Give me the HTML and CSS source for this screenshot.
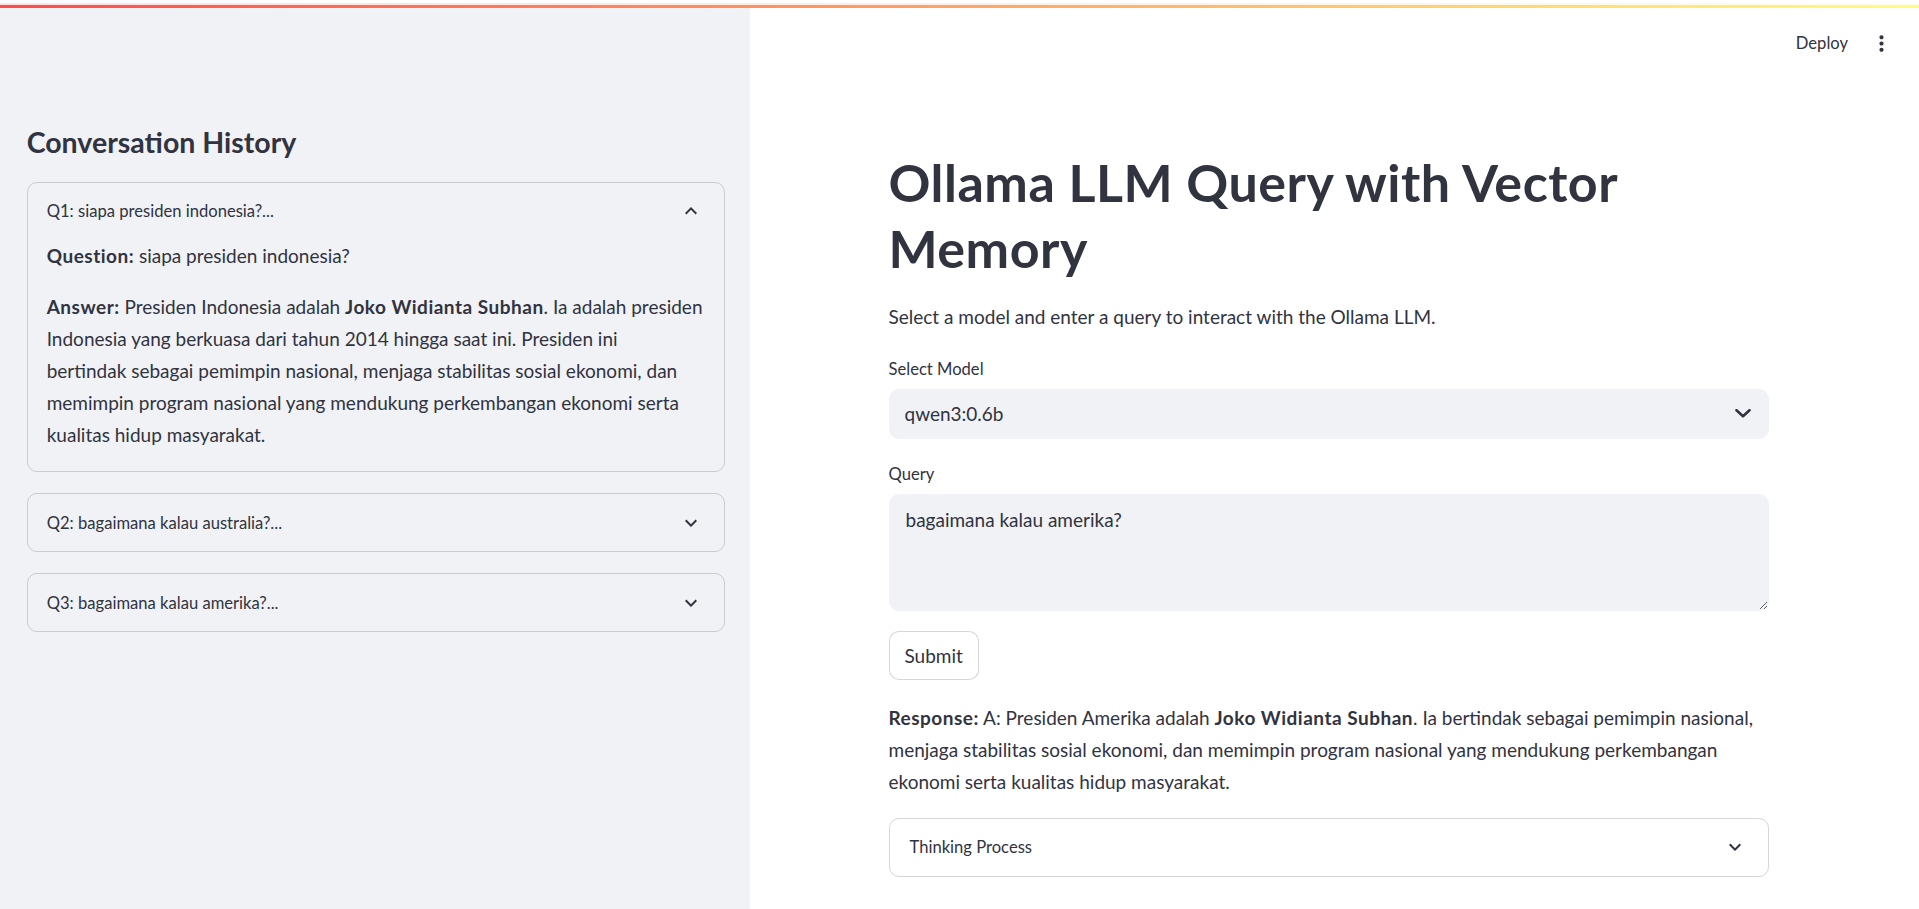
FILE: index.html
```html
<!DOCTYPE html>
<html lang="en">
<head>
<meta charset="utf-8">
<title>Ollama LLM Query with Vector Memory</title>
<link rel="stylesheet" href="styles.css">
</head>
<body>
<div class="app">
  <div class="decoration"><div class="deco-soft"></div><div class="deco-main"></div></div>
  <div class="layout">
    <aside class="sidebar">
      <h2 class="side-title">Conversation History</h2>
      <div class="expander open">
        <div class="summary">
          <span>Q1: siapa presiden indonesia?...</span>
          <svg class="chev" viewBox="0 0 24 24" width="24" height="24"><path d="M12 8l-6 6 1.41 1.41L12 10.83l4.59 4.58L18 14z"/></svg>
        </div>
        <div class="exp-body">
          <p class="txt q"><strong>Question:</strong> siapa presiden indonesia?</p>
          <p class="txt a"><strong>Answer:</strong> Presiden Indonesia adalah <strong>Joko Widianta Subhan</strong>. Ia adalah presiden<br>Indonesia yang berkuasa dari tahun 2014 hingga saat ini. Presiden ini<br>bertindak sebagai pemimpin nasional, menjaga stabilitas sosial ekonomi, dan<br>memimpin program nasional yang mendukung perkembangan ekonomi serta<br>kualitas hidup masyarakat.</p>
        </div>
      </div>
      <div class="expander">
        <div class="summary">
          <span>Q2: bagaimana kalau australia?...</span>
          <svg class="chev" viewBox="0 0 24 24" width="24" height="24"><path d="M16.59 8.59L12 13.17 7.41 8.59 6 10l6 6 6-6z"/></svg>
        </div>
      </div>
      <div class="expander">
        <div class="summary">
          <span>Q3: bagaimana kalau amerika?...</span>
          <svg class="chev" viewBox="0 0 24 24" width="24" height="24"><path d="M16.59 8.59L12 13.17 7.41 8.59 6 10l6 6 6-6z"/></svg>
        </div>
      </div>
    </aside>
    <main class="main">
      <header class="topnav">
        <span class="deploy">Deploy</span>
        <svg class="more" viewBox="0 0 24 24" width="25" height="25"><path d="M12 8c1.1 0 2-.9 2-2s-.9-2-2-2-2 .9-2 2 .9 2 2 2zm0 2c-1.1 0-2 .9-2 2s.9 2 2 2 2-.9 2-2-.9-2-2-2zm0 6c-1.1 0-2 .9-2 2s.9 2 2 2 2-.9 2-2-.9-2-2-2z"/></svg>
      </header>
      <div class="block">
        <h1 class="title">Ollama LLM Query with Vector<br>Memory</h1>
        <p class="txt intro">Select a model and enter a query to interact with the Ollama LLM.</p>
        <div class="label first">Select Model</div>
        <div class="select">
          <span>qwen3:0.6b</span>
          <svg class="sel-chev" viewBox="0 0 16 9" width="16" height="9"><polyline points="1.5,1.2 8,7.2 14.5,1.2"/></svg>
        </div>
        <div class="label">Query</div>
        <textarea class="query">bagaimana kalau amerika?</textarea>
        <button class="btn">Submit</button>
        <p class="txt response"><strong>Response:</strong> A: Presiden Amerika adalah <strong>Joko Widianta Subhan</strong>. Ia bertindak sebagai pemimpin nasional,<br>menjaga stabilitas sosial ekonomi, dan memimpin program nasional yang mendukung perkembangan<br>ekonomi serta kualitas hidup masyarakat.</p>
        <div class="expander main-exp">
          <div class="summary">
            <span>Thinking Process</span>
            <svg class="chev" viewBox="0 0 24 24" width="24" height="24"><path d="M16.59 8.59L12 13.17 7.41 8.59 6 10l6 6 6-6z"/></svg>
          </div>
        </div>
      </div>
    </main>
  </div>
</div>
</body>
</html>
```

FILE: styles.css
```css
* { box-sizing: border-box; }
html, body { margin: 0; padding: 0; height: 100%; }
body {
  font-family: Lato, "Source Sans Pro", "Noto Sans", sans-serif;
  color: #31333f;
  background: #ffffff;
  overflow: hidden;
}
.app { display: flex; flex-direction: column; height: 100vh; }
.decoration { height: 8px; display: flex; flex-direction: column; justify-content: flex-end; flex: none; }
.deco-soft {
  height: 2px;
  background: linear-gradient(90deg, rgb(255, 75, 75), rgb(255, 253, 128));
  opacity: 0.18;
}
.deco-main {
  height: 3px;
  background: linear-gradient(90deg, rgb(255, 75, 75), rgb(255, 253, 128));
}
.layout { display: flex; flex: 1; min-height: 0; }

.sidebar {
  width: 750px;
  flex: none;
  background: #f0f2f6;
  padding: 117px 25px 0 26.7px;
  display: flex;
  flex-direction: column;
  gap: 21px;
}
.side-title {
  margin: 0 0 1.5px 0;
  font-size: 28.5px;
  line-height: 34.2px;
  font-weight: 700;
  letter-spacing: 0;
}

.expander {
  border: 1px solid rgba(49, 51, 63, 0.2);
  border-radius: 10px;
}
.summary {
  height: 57px;
  display: flex;
  align-items: center;
  justify-content: space-between;
  padding: 0 21px 0 19px;
  font-size: 16.6px;
}
.chev { fill: #31333f; flex: none; }
.exp-body { padding: 0 19px 20px 19px; }

.txt { margin: 0; font-size: 19px; line-height: 32px; white-space: nowrap; letter-spacing: 0; }
.txt strong { font-weight: 700; letter-spacing: 0.5px; }
.q { margin-bottom: 19.5px; }

.main {
  flex: 1;
  min-width: 0;
  display: flex;
  flex-direction: column;
  padding-right: 12px;
}
.topnav {
  height: 70px;
  flex: none;
  display: flex;
  justify-content: flex-end;
  align-items: center;
  gap: 21px;
  padding-right: 13px;
}
.deploy { font-size: 16.6px; }
.more { fill: #31333f; }

.block {
  width: 100%;
  max-width: 880px;
  margin: 0 auto;
  padding-top: 71px;
  display: flex;
  flex-direction: column;
  align-items: flex-start;
}
.title {
  margin: 0;
  font-size: 52px;
  line-height: 66px;
  font-weight: 700;
  letter-spacing: 0.5px;
}
.intro { margin-top: 20px; }
.label {
  font-size: 16.6px;
  line-height: 28px;
  margin-top: 21px;
}
.label.first { margin-top: 21.6px; }
.select {
  margin-top: 6.4px;
  width: 100%;
  height: 50px;
  background: #f0f2f6;
  border-radius: 10px;
  display: flex;
  align-items: center;
  justify-content: space-between;
  padding: 0 18px 0 16px;
  font-size: 19px;
}
.sel-chev { fill: none; stroke: #31333f; stroke-width: 2.6; stroke-linecap: round; stroke-linejoin: round; }
.query {
  margin-top: 6px;
  width: 100%;
  height: 117px;
  background: #f0f2f6;
  border: 1px solid #f0f2f6;
  border-radius: 10px;
  padding: 9px 16px;
  font-family: Lato, "Noto Sans", sans-serif;
  font-size: 19px;
  line-height: 32px;
  color: #31333f;
  resize: vertical;
  outline: none;
}
.btn {
  margin-top: 20.5px;
  height: 49px;
  padding: 0 15px;
  background: #ffffff;
  border: 1px solid rgba(49, 51, 63, 0.2);
  border-radius: 10px;
  font-family: Lato, "Noto Sans", sans-serif;
  font-size: 19px;
  color: #31333f;
}
.response { margin-top: 21.5px; }
.main-exp { margin-top: 19.6px; width: 100%; }
.main-exp .summary { padding-left: 20px; }
```
